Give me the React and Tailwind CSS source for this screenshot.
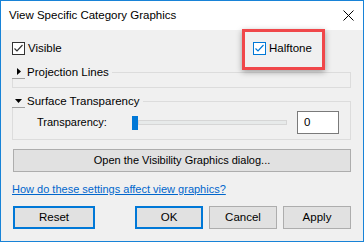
import React from 'react';

const font = { fontFamily: '"Liberation Sans", Arial, sans-serif' };

const Check = ({ blue }) => (
  <span
    className={`flex items-center justify-center w-[13px] h-[13px] bg-white border ${blue ? 'border-[#0078d7]' : 'border-[#333333]'}`}
  >
    <svg width="11" height="11" viewBox="0 0 11 11">
      <path d="M1.5 5.5 L4 8 L9.5 2" fill="none" stroke={blue ? '#0078d7' : '#333333'} strokeWidth="1.2" />
    </svg>
  </span>
);

const GroupHeader = ({ open, label }) => (
  <div className="absolute left-[-1px] top-[-8px] flex items-center bg-[#f0f0f0] pr-[3px]">
    <span className="flex items-center justify-center w-[13px] h-[14px] border-b border-[#a0a0a0] bg-[#f0f0f0]">
      {open ? (
        <svg width="7" height="4" viewBox="0 0 7 4"><path d="M0 0 H7 L3.5 4 Z" fill="#000" /></svg>
      ) : (
        <svg width="4" height="7" viewBox="0 0 4 7"><path d="M0 0 V7 L4 3.5 Z" fill="#000" /></svg>
      )}
    </span>
    <span className="ml-[2px] text-[11.5px] leading-[14px] text-black">{label}</span>
  </div>
);

const Btn = ({ children, focus }) => (
  <button
    className={`h-[23px] w-[68px] bg-[#e1e1e1] text-[11.5px] text-black ${focus ? 'border-2 border-[#0078d7]' : 'border border-[#adadad]'}`}
  >
    {children}
  </button>
);

export default function App() {
  return (
    <div className="relative w-[364px] h-[242px] flex flex-col border border-[#1883d7] bg-[#f0f0f0]" style={font}>
      {/* title bar */}
      <div className="flex h-[29px] items-center justify-between bg-white pl-[8px] pr-[9px]">
        <span className="text-[11.5px] text-black">View Specific Category Graphics</span>
        <svg width="11" height="11" viewBox="0 0 11 11">
          <path d="M0.5 0.5 L10.5 10.5 M10.5 0.5 L0.5 10.5" stroke="#000" strokeWidth="1" />
        </svg>
      </div>

      <div className="flex flex-col pl-[11px] pr-[12px]">
        {/* checkboxes */}
        <div className="mt-[12px] flex h-[13px] items-center">
          <label className="flex w-[241px] items-center gap-[3px] text-[11.5px] text-black">
            <Check />
            Visible
          </label>
          <label className="flex items-center gap-[3px] text-[11.5px] text-black">
            <Check blue />
            Halftone
          </label>
        </div>

        {/* projection lines */}
        <div className="relative mt-[17px] h-[16px] border border-[#dcdcdc]">
          <GroupHeader label="Projection Lines" />
        </div>

        {/* surface transparency */}
        <div className="relative mt-[13px] h-[39px] border border-[#dcdcdc] pt-[9px]">
          <GroupHeader open label="Surface Transparency" />
          <div className="flex h-[23px] items-center">
            <span className="w-[119px] pl-[24px] text-[11px] text-black">Transparency:</span>
            <span className="h-[14px] w-[6px] bg-[#0078d7]" />
            <span className="h-[5px] w-[149px] border border-[#d6d6d6] bg-[#e7eaea]" />
            <span className="ml-[10px] flex h-[23px] w-[42px] items-center border border-[#7a7a7a] bg-white pl-[6px] text-[11.5px] text-black">
              0
            </span>
          </div>
        </div>

        <button className="ml-px mt-[9px] h-[23px] w-[338px] border border-[#adadad] bg-[#e1e1e1] text-[11px] text-black">
          Open the Visibility Graphics dialog...
        </button>

        <a href="#" className="mt-[9px] text-[11px] leading-[16px] text-[#0066cc] underline">
          How do these settings affect view graphics?
        </a>

        <div className="ml-px mt-[9px] flex items-center">
          <button className="h-[23px] w-[82px] border-2 border-[#0078d7] bg-[#e1e1e1] text-[11.5px] text-black">Reset</button>
          <div className="ml-auto flex gap-[6px]">
            <Btn focus>OK</Btn>
            <Btn>Cancel</Btn>
            <Btn>Apply</Btn>
          </div>
        </div>
      </div>

      {/* annotation highlight */}
      <div className="absolute left-[241px] top-[28px] h-[41px] w-[83px] border-[3px] border-[#f0474a] shadow-[0_2px_6px_rgba(0,0,0,0.35)]" />
    </div>
  );
}
